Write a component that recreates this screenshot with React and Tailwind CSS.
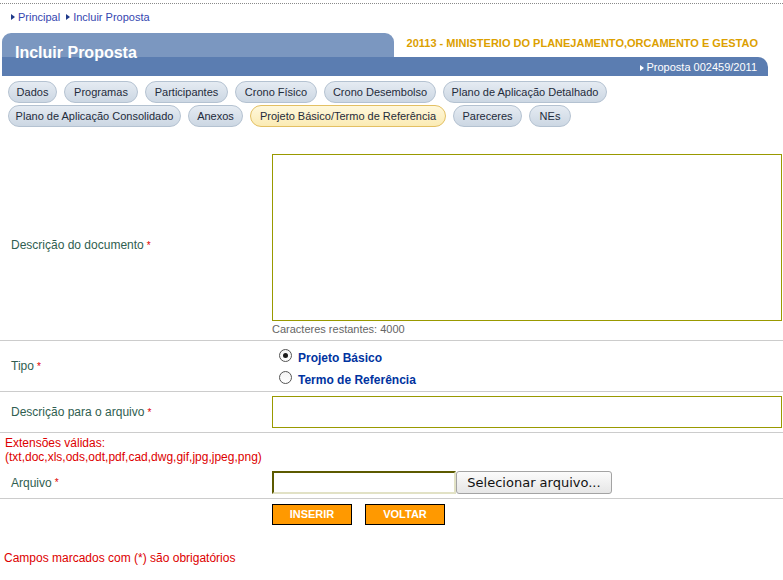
import React from 'react'

const abas1 = [
  { nome: 'Dados', w: 'w-[49px]' },
  { nome: 'Programas', w: 'w-[74px]' },
  { nome: 'Participantes', w: 'w-[83px]' },
  { nome: 'Crono Físico', w: 'w-[82px]' },
  { nome: 'Crono Desembolso', w: 'w-[112px]' },
  { nome: 'Plano de Aplicação Detalhado', w: 'w-[164px]' },
]

const abas2 = [
  { nome: 'Plano de Aplicação Consolidado', w: 'w-[173px]' },
  { nome: 'Anexos', w: 'w-[55px]' },
  { nome: 'Projeto Básico/Termo de Referência', w: 'w-[196px]', ativa: true },
  { nome: 'Pareceres', w: 'w-[69px]' },
  { nome: 'NEs', w: 'w-[42px]' },
]

function Aba({ aba }) {
  const cor = aba.ativa
    ? 'from-[#fff8dc] to-[#fbebb4] border-[#e3c063]'
    : 'from-[#e5ebf2] to-[#ccd7e3] border-[#b4c2d1]'
  return (
    <div
      className={`${aba.w} h-[22px] flex items-center justify-center rounded-full border bg-linear-to-b ${cor} text-[11px] text-[#1f2b3b] whitespace-nowrap`}
    >
      {aba.nome}
    </div>
  )
}

function Obrigatorio() {
  return <span className="text-[#e00000] text-[10px] align-top ml-[3px]">*</span>
}

function Seta({ cor }) {
  return (
    <svg width="4" height="6" viewBox="0 0 4 6" className="mr-[3px]">
      <path d="M0 0L4 3L0 6Z" fill={cor} />
    </svg>
  )
}

function Radio({ marcado, children }) {
  return (
    <div className="h-[22px] flex items-center">
      <span className="ml-[7px] mr-[6px] -mt-[5px] w-[13px] h-[13px] rounded-full border border-[#555] bg-linear-to-b from-[#f4f4f4] to-[#ffffff] flex items-center justify-center">
        {marcado && <span className="w-[5px] h-[5px] rounded-full bg-[#1a1a1a]" />}
      </span>
      <span className="text-[12px] font-bold text-[#0033a0]">{children}</span>
    </div>
  )
}

export default function App() {
  return (
    <div className="w-[783px] h-[580px] bg-white font-['Liberation_Sans',Arial,sans-serif] overflow-hidden">
      <div className="mt-[3px] border-t border-dotted border-[#8a8a8a]" />

      <div className="mt-[6px] pl-[11px] flex items-center gap-[6px] text-[11px] leading-[14px] text-[#3546b0]">
        <span className="flex items-center">
          <Seta cor="#1f3a8a" />
          Principal
        </span>
        <span className="flex items-center">
          <Seta cor="#1f3a8a" />
          Incluir Proposta
        </span>
      </div>

      <div className="mt-[9px] flex items-start">
        <div className="ml-[2px] w-[392px] h-[24px] rounded-t-[9px] bg-[#7b97c0] pl-[13px] pt-[12px] text-white font-bold text-[16px] leading-[16px] whitespace-nowrap">
          Incluir Proposta
        </div>
        <div className="flex-1 pt-[3px] pr-[25px] text-right text-[11px] leading-[14px] font-bold text-[#dca000] whitespace-nowrap">
          20113 - MINISTERIO DO PLANEJAMENTO,ORCAMENTO E GESTAO
        </div>
      </div>
      <div className="ml-[2px] w-[766px] h-[19px] bg-[#5b7db1] rounded-tr-[10px] flex items-center justify-end pr-[11px] pt-[2px] text-white text-[11px]">
        <Seta cor="#ffffff" />
        Proposta 002459/2011
      </div>

      <div className="mt-[5px] pl-[8px] flex gap-[7px]">
        {abas1.map((a) => (
          <Aba key={a.nome} aba={a} />
        ))}
      </div>
      <div className="mt-[2px] pl-[8px] flex gap-[7px]">
        {abas2.map((a) => (
          <Aba key={a.nome} aba={a} />
        ))}
      </div>

      <div className="mt-[23px] text-[12px] text-[#2f5e50]">
        <div className="flex border-b border-[#cccccc]">
          <div className="w-[272px] pl-[11px] flex items-center">
            Descrição do documento
            <Obrigatorio />
          </div>
          <div className="pt-[4px] pb-[4px]">
            <textarea className="block w-[510px] h-[167px] border border-[#999900] resize-none outline-none" />
            <div className="mt-[2px] text-[11px] leading-[13px] text-[#666]">Caracteres restantes: 4000</div>
          </div>
        </div>

        <div className="flex border-b border-[#cccccc]">
          <div className="w-[272px] pl-[11px] flex items-center">
            Tipo
            <Obrigatorio />
          </div>
          <div className="pt-[6px]">
            <Radio marcado>Projeto Básico</Radio>
            <Radio>Termo de Referência</Radio>
          </div>
        </div>

        <div className="flex border-b border-[#cccccc]">
          <div className="w-[272px] pl-[11px] flex items-center">
            Descrição para o arquivo
            <Obrigatorio />
          </div>
          <div className="py-[4px]">
            <input className="block w-[510px] h-[32px] border border-[#999900] outline-none" />
          </div>
        </div>

        <div className="pt-[3px] pb-[3px] pl-[5px] leading-[14px] text-[#dd0000]">
          <div>Extensões válidas:</div>
          <div>(txt,doc,xls,ods,odt,pdf,cad,dwg,gif,jpg,jpeg,png)</div>
        </div>

        <div className="flex border-b border-[#cccccc]">
          <div className="w-[272px] pl-[11px] flex items-center">
            Arquivo
            <Obrigatorio />
          </div>
          <div className="pt-[4px] pb-[4px] flex">
            <div className="w-[184px] h-[23px] border-2 border-t-[#5c5a00] border-l-[#5c5a00] border-b-[#e2e2c6] border-r-[#e2e2c6] bg-white" />
            <button
              type="button"
              className="w-[156px] h-[23px] rounded-[3px] border border-[#a3a3a3] bg-linear-to-b from-[#fbfbfb] to-[#e6e6e6] font-['DejaVu_Sans',sans-serif] text-[13px] text-[#111]"
            >
              Selecionar arquivo...
            </button>
          </div>
        </div>

        <div className="pt-[5px] pl-[272px] flex gap-[13px]">
          <button
            type="button"
            className="w-[80px] h-[21px] bg-[#ff9900] border border-black text-white font-bold text-[11px]"
          >
            INSERIR
          </button>
          <button
            type="button"
            className="w-[80px] h-[21px] bg-[#ff9900] border border-black text-white font-bold text-[11px]"
          >
            VOLTAR
          </button>
        </div>

        <div className="mt-[26px] pl-[4px] leading-[14px] text-[#dd0000]">
          Campos marcados com (*) são obrigatórios
        </div>
      </div>
    </div>
  )
}
